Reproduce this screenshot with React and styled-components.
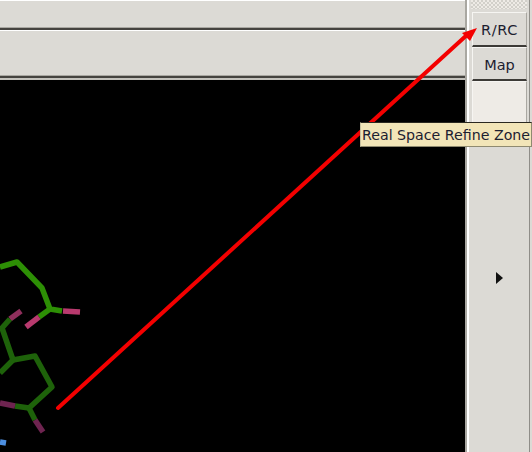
import styled, { createGlobalStyle } from "styled-components";

const GlobalStyle = createGlobalStyle`
  html, body {
    margin: 0;
    padding: 0;
    background: #dcdad5;
  }
`;

const Window = styled.div`
  width: 532px;
  height: 452px;
  display: flex;
  overflow: hidden;
  position: relative;
  font-family: "DejaVu Sans", sans-serif;
`;

const Main = styled.div`
  width: 465px;
  flex: none;
  display: flex;
  flex-direction: column;
`;

const Bar = styled.div`
  height: ${(p) => p.$height}px;
  flex: none;
  box-sizing: border-box;
  background: #dcdad5;
  border-top: 1px solid #fff;
  border-bottom: 2px solid #45433f;
  box-shadow: inset 0 -1px 0 #a9a7a1;
`;

const Canvas = styled.div`
  flex: 1;
  background: #000;
  border-top: 2px solid #c4c2bc;
  background-clip: padding-box;
`;

const Side = styled.div`
  flex: 1;
  display: flex;
  border-left: 2px solid #a9a7a1;
`;

const SidePanel = styled.div`
  flex: 1;
  display: flex;
  flex-direction: column;
  border-left: 2px solid #fff;
  border-right: 1px solid #8f8d88;
  margin-right: 2px;
  padding: 0 2px;
`;

const Handle = styled.div`
  height: 9px;
  margin-bottom: 3px;
  background: repeating-conic-gradient(#d2d0ca 0 25%, #eeebe6 0 50%) 0 0 / 4px 4px;
`;

const ToolButton = styled.div`
  height: ${(p) => p.$height}px;
  flex: none;
  margin-left: 1px;
  padding-top: 2px;
  box-sizing: border-box;
  display: flex;
  align-items: center;
  justify-content: center;
  font-size: 14.5px;
  letter-spacing: ${(p) => p.$tracking || 0}px;
  color: #1c2030;
  background: ${(p) => (p.$light ? "#eeebe6" : "#dcdad5")};
  border-top: 1px solid #f6f5f2;
  border-left: 1px solid #f6f5f2;
  border-right: 1px solid #a9a7a1;
  border-bottom: 2px solid #3c3a36;
`;

const Rest = styled.div`
  flex: 1;
  display: flex;
  align-items: center;
  justify-content: center;
  padding-bottom: 42px;
`;

const Tooltip = styled.div`
  position: absolute;
  left: 360px;
  top: 122px;
  width: 172px;
  height: 25px;
  box-sizing: border-box;
  padding-left: 1px;
  display: flex;
  align-items: center;
  font-size: 14.2px;
  white-space: nowrap;
  color: #1c2030;
  background: #f2e5b8;
  border: 1px solid #2a2820;
  border-left-color: #c9c2a0;
  border-bottom-color: #8f8a70;
  border-right-color: #8f8a70;
`;

const Overlay = styled.svg`
  position: absolute;
  inset: 0;
  pointer-events: none;
`;

const Molecule = styled.g`
  fill: none;
  stroke-width: 5.5px;
  stroke-linejoin: round;
  filter: blur(0.5px);
`;

export default function App() {
  return (
    <>
      <GlobalStyle />
      <Window>
        <Main>
          <Bar $height={30} />
          <Bar $height={48} />
          <Canvas />
        </Main>
        <Side>
          <SidePanel>
            <Handle />
            <ToolButton $height={35} $tracking={0.7}>R/RC</ToolButton>
            <ToolButton $height={34}>Map</ToolButton>
            <ToolButton $height={65} $light />
            <Rest>
              <svg width="7" height="12" viewBox="0 0 7 12">
                <path d="M0 0 L7 6 L0 12 Z" fill="#111" />
              </svg>
            </Rest>
          </SidePanel>
        </Side>
        <Overlay width="532" height="452" viewBox="0 0 532 452">
          <Molecule>
            <path d="M0 267 L17 262 L42 288 L50 309 L62 311" stroke="#2d8f05" />
            <path d="M50 309 L39 317" stroke="#2d8f05" />
            <path d="M63 311 L80 312" stroke="#b83a6e" />
            <path d="M39 317 L26 327" stroke="#b83a6e" />
            <path d="M21 311 L10 319" stroke="#8f2f5c" />
            <path d="M10 319 L2 328 L13 360 L35 356 L52 387 L29 408 L15 406" stroke="#1e620a" />
            <path d="M0 373 L13 360" stroke="#1e620a" />
            <path d="M15 406 L0 403" stroke="#6e2450" />
            <path d="M29 408 L35 420" stroke="#1e620a" />
            <path d="M35 420 L43 432" stroke="#6e2450" />
            <path d="M0 442 L6 443" stroke="#4d8fe0" />
          </Molecule>
          <path d="M58 408 L468 34" stroke="#f40000" strokeWidth="4" strokeLinecap="round" />
          <path d="M477 28 L462 33 L470 41 Z" fill="#f40000" />
        </Overlay>
        <Tooltip>Real Space Refine Zone</Tooltip>
      </Window>
    </>
  );
}
